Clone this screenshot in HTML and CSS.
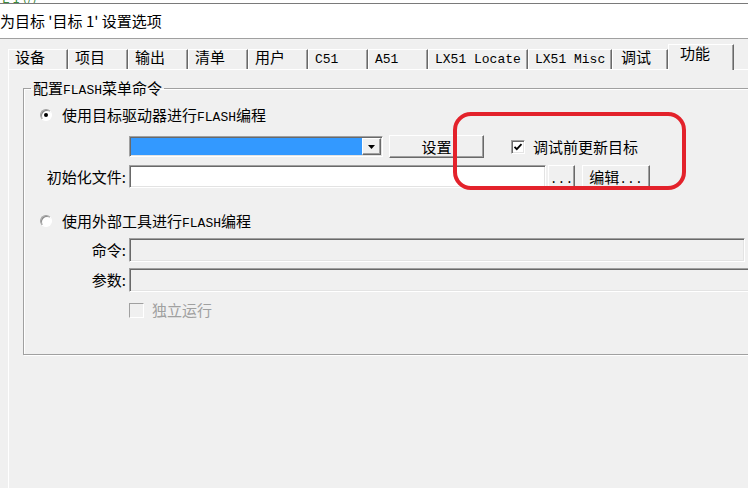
FILE: index.html
```html
<!DOCTYPE html>
<html>
<head>
    <meta charset="utf-8">
    <meta name="viewport" content="width=device-width, initial-scale=1.0">
    <title>为目标 '目标 1' 设置选项</title>
    <link rel="stylesheet" href="styles.css">
</head>
<body>
    <div class="top-strip"><span class="top-strip-text">E 1 (/)</span></div>
    <div class="title-bar">为目标 '目标 1' 设置选项</div>

    <div class="tabs">
        <div class="tab">设备</div>
        <div class="tab">项目</div>
        <div class="tab">输出</div>
        <div class="tab">清单</div>
        <div class="tab">用户</div>
        <div class="tab"><span class="en">C51</span></div>
        <div class="tab"><span class="en">A51</span></div>
        <div class="tab tab-locate"><span class="en">LX51 Locate</span></div>
        <div class="tab tab-misc"><span class="en">LX51 Misc</span></div>
        <div class="tab tab-debug">调试</div>
        <div class="tab tab-active">功能</div>
    </div>

    <div class="panel">
        <fieldset class="group">
            <legend>配置<span class="en">FLASH</span>菜单命令</legend>

            <div class="row option option-first">
                <span class="radio radio-on"></span>
                <span>使用目标驱动器进行<span class="en">FLASH</span>编程</span>
            </div>

            <div class="row row-driver">
                <span class="row-label"></span>
                <div class="combo">
                    <div class="combo-value"></div>
                    <div class="combo-arrow">
                        <svg width="7" height="4" viewBox="0 0 7 4"><polygon points="0,0 7,0 3.5,4" fill="#000"/></svg>
                    </div>
                </div>
                <button class="btn btn-setup">设置</button>
                <span class="check check-update">
                    <svg width="10" height="10" viewBox="0 0 10 10"><polyline points="1.5,4.8 3.8,7.2 8.5,2.2" fill="none" stroke="#000" stroke-width="1.8"/></svg>
                </span>
                <span class="check-label">调试前更新目标</span>
            </div>

            <div class="row row-file">
                <span class="row-label">初始化文件:</span>
                <div class="field field-file"></div>
                <button class="btn btn-browse"><span class="en">...</span></button>
                <button class="btn btn-edit">编辑<span class="en">...</span></button>
            </div>

            <div class="row option option-second">
                <span class="radio"></span>
                <span>使用外部工具进行<span class="en">FLASH</span>编程</span>
            </div>

            <div class="row row-cmd">
                <span class="row-label">命令:</span>
                <div class="field field-off field-cmd"></div>
            </div>

            <div class="row row-args">
                <span class="row-label">参数:</span>
                <div class="field field-off field-args"></div>
            </div>

            <div class="row row-standalone">
                <span class="row-label"></span>
                <span class="check check-off"></span>
                <span class="check-label label-off">独立运行</span>
            </div>
        </fieldset>
    </div>

    <div class="callout"></div>
</body>
</html>
```

FILE: styles.css
```css
* {
    box-sizing: border-box;
    margin: 0;
    padding: 0;
}

html,
body {
    width: 748px;
    height: 488px;
    overflow: hidden;
}

body {
    position: relative;
    background: #f0f0f0;
    font-family: "Noto Sans CJK SC", sans-serif;
    font-size: 15px;
    line-height: 18px;
    color: #000;
}

.en {
    font-family: "Liberation Mono", monospace;
    font-size: 13px;
    line-height: 12px;
}

/* window chrome */
.top-strip {
    height: 4px;
    overflow: hidden;
    background: #fff;
    border-bottom: 1px solid #7a7a7a;
}

.top-strip-text {
    display: block;
    margin-top: -8px;
    padding-left: 2px;
    color: #3c8a3c;
    font-size: 13px;
    line-height: 11px;
}

.title-bar {
    height: 35px;
    background: #fff;
    border-bottom: 1px solid #a0a0a0;
    line-height: 34px;
    white-space: nowrap;
}

/* tab strip */
.tabs {
    display: flex;
    align-items: flex-end;
    margin-top: 5px;
    padding-left: 8px;
}

.tab {
    flex: none;
    width: 60px;
    height: 20px;
    padding-left: 6px;
    border-top: 1px solid #fff;
    border-left: 1px solid #fff;
    border-right: 1px solid #696969;
    box-shadow: inset -1px 0 #a0a0a0;
    line-height: 14px;
    white-space: nowrap;
}

.tab-locate {
    width: 100px;
}

.tab-misc {
    width: 84px;
}

.tab-debug {
    width: 56px;
    padding-left: 8px;
}

.tab-active {
    position: relative;
    z-index: 1;
    width: 66px;
    height: 26px;
    margin-bottom: -1px;
    padding-left: 11px;
    background: #f0f0f0;
    line-height: 16px;
}

/* page panel */
.panel {
    height: 430px;
    margin-left: 8px;
    padding: 10px 0 0 14px;
    border-top: 1px solid #fff;
    border-left: 1px solid #fff;
}

.group {
    width: 780px;
    padding: 0 0 35px 0;
    border: 1px solid #a0a0a0;
    box-shadow: 1px 1px 0 #fff, inset 1px 1px 0 #fff;
}

.group legend {
    height: 16px;
    margin-left: 7px;
    padding: 0 2px;
    line-height: 16px;
}

.row {
    display: flex;
    align-items: center;
    white-space: nowrap;
}

.row-label {
    flex: none;
    width: 103px;
    padding-right: 1px;
    text-align: right;
}

.option {
    height: 18px;
    padding-left: 16px;
}

.option-first {
    margin-top: 10px;
}

.row-driver {
    height: 23px;
    margin-top: 11px;
}

.row-file {
    height: 23px;
    margin-top: 7px;
}

.option-second {
    margin-top: 24px;
}

.row-cmd {
    height: 24px;
    margin-top: 8px;
}

.row-args {
    height: 24px;
    margin-top: 6px;
}

.row-standalone {
    height: 18px;
    margin-top: 9px;
}

/* controls */
.radio {
    flex: none;
    display: flex;
    align-items: center;
    justify-content: center;
    width: 12px;
    height: 12px;
    margin-right: 10px;
    border-radius: 50%;
    border: 1px solid;
    border-color: #a0a0a0 #fff #fff #a0a0a0;
    background: #fff;
    box-shadow: inset 1px 1px #8a8a8a;
}

.radio-on::after {
    content: '';
    width: 4px;
    height: 4px;
    border-radius: 50%;
    background: #000;
}

.field,
.combo,
.check {
    flex: none;
    border: 1px solid;
    border-color: #a0a0a0 #fff #fff #a0a0a0;
    box-shadow: inset 1px 1px #696969, inset -1px -1px #e3e3e3;
    background: #fff;
}

.field {
    height: 23px;
    margin-left: 2px;
}

.field-file {
    width: 417px;
}

.field-off {
    height: 24px;
    background: #f0f0f0;
}

.field-cmd {
    width: 616px;
}

.field-args {
    width: 640px;
}

.combo {
    display: flex;
    width: 254px;
    height: 21px;
    margin-left: 2px;
    padding: 1px;
}

.combo-value {
    flex: 1;
    background: #3399ff;
}

.combo-arrow,
.btn {
    border: 1px solid;
    border-color: #fff #696969 #696969 #fff;
    box-shadow: inset -1px -1px #a0a0a0;
    background: #f0f0f0;
}

.combo-arrow {
    display: flex;
    align-items: center;
    justify-content: center;
    width: 19px;
}

.btn {
    flex: none;
    height: 23px;
    font: inherit;
    color: #000;
    line-height: 18px;
}

.btn-setup {
    width: 95px;
    margin-left: 6px;
}

.btn-browse {
    width: 27px;
    margin-left: 2px;
}

.btn-edit {
    width: 68px;
    margin-left: 7px;
}

.check {
    display: flex;
    align-items: center;
    justify-content: center;
    width: 14px;
    height: 14px;
}

.check-update {
    margin-left: 27px;
}

.check-off {
    width: 15px;
    height: 15px;
    margin-left: 2px;
    background: #f0f0f0;
    box-shadow: none;
}

.check-label {
    margin-left: 8px;
}

.label-off {
    color: #a0a0a0;
}

/* red annotation ring drawn over the dialog */
.callout {
    position: absolute;
    left: 453px;
    top: 112px;
    width: 233px;
    height: 78px;
    border: 4px solid #e3222b;
    border-radius: 18px;
    pointer-events: none;
}
```
